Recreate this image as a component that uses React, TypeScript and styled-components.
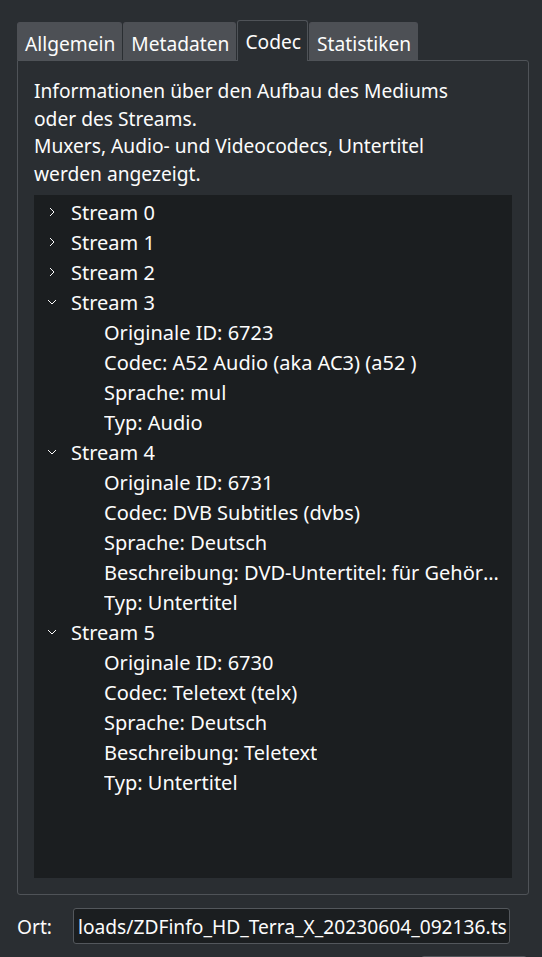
import React, { FC } from 'react'
import styled, { createGlobalStyle } from 'styled-components'

const GlobalStyle = createGlobalStyle`
  html, body {
    margin: 0;
    padding: 0;
    background: #2a2e32;
  }
  body {
    font-family: 'Noto Sans', 'DejaVu Sans', sans-serif;
    color: #fcfcfc;
    overflow: hidden;
  }
`

const Window = styled.div`
  width: 542px;
  height: 957px;
  box-sizing: border-box;
  padding: 19px 13px 0 17px;
  display: flex;
  flex-direction: column;
  overflow: hidden;
  & > * {
    flex-shrink: 0;
  }
`

const TabBar = styled.div`
  display: flex;
  align-items: flex-end;
  height: 41px;
  gap: 1px;
`

const Tab = styled.div<{ $active?: boolean }>`
  box-sizing: border-box;
  height: ${({ $active }) => ($active ? '41px' : '38px')};
  padding: 0 6px 0 7px;
  display: flex;
  align-items: center;
  font-size: 19.2px;
  border-radius: 3px 3px 0 0;
  background: ${({ $active }) => ($active ? '#2a2e32' : '#4d5055')};
  border: 1px solid ${({ $active }) => ($active ? '#4f5358' : '#4d5055')};
  border-bottom: none;
  margin-bottom: ${({ $active }) => ($active ? '-1px' : '0')};
  position: relative;
  z-index: ${({ $active }) => ($active ? 1 : 0)};
  padding-top: ${({ $active }) => ($active ? '0' : '3px')};
`

const Panel = styled.div`
  box-sizing: border-box;
  height: 835px;
  border: 1px solid #4f5358;
  border-radius: 0 3px 3px 3px;
  padding: 16px 16px 16px 16px;
  display: flex;
  flex-direction: column;
`

const Description = styled.p`
  margin: 0 0 8px 0;
  font-size: 19.2px;
  line-height: 27.5px;
`

const Tree = styled.div`
  flex: 1;
  background: #1b1e20;
  padding-top: 2px;
  overflow: hidden;
`

const Row = styled.div<{ $depth: number }>`
  height: 30px;
  display: flex;
  align-items: center;
  font-size: 20px;
  white-space: nowrap;
  padding-left: ${({ $depth }) => ($depth === 0 ? 13 : 70)}px;
  padding-right: 8px;
`

const Arrow = styled.span`
  width: 24px;
  display: inline-flex;
  align-items: center;
  flex-shrink: 0;
`

const Label = styled.span`
  overflow: hidden;
  text-overflow: ellipsis;
`

const Footer = styled.div`
  display: flex;
  align-items: center;
  margin-top: 13px;
  height: 36px;
`

const FieldLabel = styled.span`
  font-size: 19.2px;
  width: 56px;
`

const Input = styled.div`
  box-sizing: border-box;
  width: 437px;
  height: 36px;
  background: #1b1e20;
  border: 1px solid #53575c;
  border-radius: 3px;
  display: flex;
  align-items: center;
  padding-left: 4px;
  font-size: 19.2px;
  overflow: hidden;
  white-space: nowrap;
`

const BottomButton = styled.div`
  align-self: flex-end;
  margin-top: 12px;
  margin-right: 2px;
  width: 104px;
  height: 20px;
  border: 1px solid #53575c;
  border-radius: 3px;
  background: #31363b;
`

const Chevron: FC<{ open?: boolean }> = ({ open }) => (
  <svg width="10" height="10" viewBox="0 0 10 10">
    {open ? (
      <path d="M1 3 L5 7 L9 3" stroke="#fcfcfc" strokeWidth="1" fill="none" />
    ) : (
      <path d="M3 1 L7 5 L3 9" stroke="#fcfcfc" strokeWidth="1" fill="none" />
    )}
  </svg>
)

interface Stream {
  name: string
  fields: string[]
}

const streams: Stream[] = [
  { name: 'Stream 0', fields: [] },
  { name: 'Stream 1', fields: [] },
  { name: 'Stream 2', fields: [] },
  {
    name: 'Stream 3',
    fields: ['Originale ID: 6723', 'Codec: A52 Audio (aka AC3) (a52 )', 'Sprache: mul', 'Typ: Audio'],
  },
  {
    name: 'Stream 4',
    fields: [
      'Originale ID: 6731',
      'Codec: DVB Subtitles (dvbs)',
      'Sprache: Deutsch',
      'Beschreibung: DVD-Untertitel: für Gehörlose und Hörgeschädigte',
      'Typ: Untertitel',
    ],
  },
  {
    name: 'Stream 5',
    fields: [
      'Originale ID: 6730',
      'Codec: Teletext (telx)',
      'Sprache: Deutsch',
      'Beschreibung: Teletext',
      'Typ: Untertitel',
    ],
  },
]

const App: FC = () => (
  <>
    <GlobalStyle />
    <Window>
      <TabBar>
        <Tab>Allgemein</Tab>
        <Tab>Metadaten</Tab>
        <Tab $active>Codec</Tab>
        <Tab>Statistiken</Tab>
      </TabBar>
      <Panel>
        <Description>
          Informationen über den Aufbau des Mediums
          <br />
          oder des Streams.
          <br />
          Muxers, Audio- und Videocodecs, Untertitel
          <br />
          werden angezeigt.
        </Description>
        <Tree>
          {streams.map((s) => (
            <React.Fragment key={s.name}>
              <Row $depth={0}>
                <Arrow>
                  <Chevron open={s.fields.length > 0} />
                </Arrow>
                <Label>{s.name}</Label>
              </Row>
              {s.fields.map((f) => (
                <Row $depth={1} key={s.name + f}>
                  <Label>{f}</Label>
                </Row>
              ))}
            </React.Fragment>
          ))}
        </Tree>
      </Panel>
      <Footer>
        <FieldLabel>Ort:</FieldLabel>
        <Input>loads/ZDFinfo_HD_Terra_X_20230604_092136.ts</Input>
      </Footer>
      <BottomButton />
    </Window>
  </>
)

export default App
